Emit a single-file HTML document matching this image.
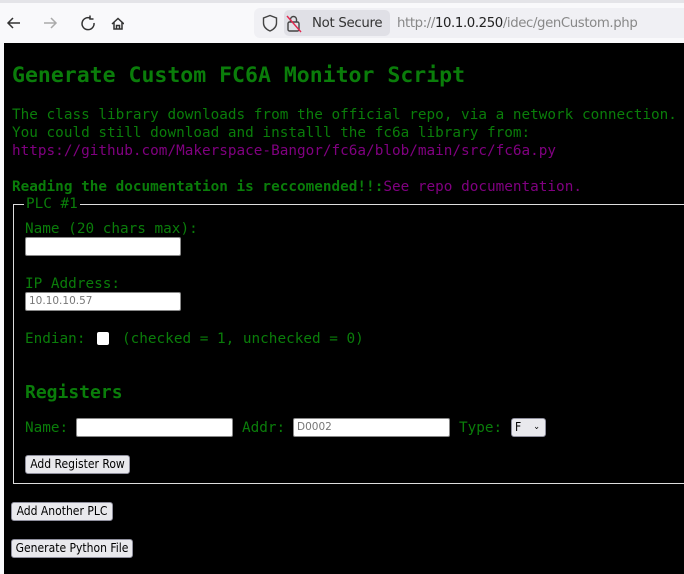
<!DOCTYPE html>
<html><head><meta charset="utf-8"><style>
*{margin:0;padding:0;box-sizing:border-box}
body{width:684px;height:574px;overflow:hidden;background:#f9f9fb;position:relative;font-family:"DejaVu Sans Mono","Liberation Mono",monospace}
.a{position:absolute;white-space:nowrap}
#top{position:absolute;left:0;top:0;width:684px;height:3px;background:#e4e4e8}
#url{position:absolute;left:254px;top:8px;width:440px;height:30px;background:#f0f0f4;border-radius:6px}
#pill{position:absolute;left:284px;top:10px;width:106px;height:26px;background:#e0e0e6;border-radius:5px}
.ui{font-family:"DejaVu Sans","Liberation Sans",sans-serif;font-size:13.3px}
#page{position:absolute;left:4px;top:43px;width:680px;height:531px;background:#000}
.g{color:#0a7d0a;font-size:14.35px}
.p{color:#800080;font-size:14.35px}
.in{position:absolute;background:#fff;border:1px solid #888;border-radius:2px;font-family:"DejaVu Sans",sans-serif;font-size:10.5px;color:#777;padding-left:3px;line-height:17px}
.bt{position:absolute;background:#e9e9ed;border:1px solid #8f8f9d;border-radius:3px;font-family:"DejaVu Sans Condensed","DejaVu Sans",sans-serif;font-size:12px;color:#000;text-align:center;line-height:17px}
</style></head><body>
<div id="top"></div>
<svg class="a" style="left:4px;top:14px" width="120" height="20" viewBox="0 0 120 20" fill="none" stroke-width="1.5">
<path d="M16 9H4M9 4L4 9L9 14" stroke="#333"/>
<path d="M40 9H52M47 4L52 9L47 14" stroke="#aaa"/>
<path d="M86 4A6 6 0 1 0 90 9" stroke="#333"/><path d="M86 1.5V5H89.5" stroke="#333"/>
<path d="M108 10L114 4.5L120 10M110 8.5V15H118V8.5M112.5 15V11.5H115.5V15" stroke="#333"/>
</svg>
<div id="url"></div><div id="pill"></div>
<svg class="a" style="left:261px;top:14px" width="50" height="20" viewBox="0 0 50 20" fill="none" stroke="#444" stroke-width="1.4">
<path d="M9 1.5L15.5 4V9C15.5 13 12.5 15.5 9 17C5.5 15.5 2.5 13 2.5 9V4Z"/>
<rect x="27" y="8" width="11" height="9" rx="1.5"/><path d="M29.5 8V5.5A3 3 0 0 1 35.5 5.5V8"/><path d="M26 2L40 18" stroke="#e22850"/>
</svg>
<div class="a ui" style="left:312px;top:16px;color:#333;letter-spacing:-0.3px">Not Secure</div>
<div class="a ui" style="left:397px;top:16px;color:#888;letter-spacing:-0.4px">http://<span style="color:#222">10.1.0.250</span>/idec/genCustom.php</div>
<div id="page"></div>
<div class="a" style="left:12px;top:63px;color:#0a7d0a;font-size:21.5px;font-weight:bold">Generate Custom FC6A Monitor Script</div>
<div class="a g" style="left:12px;top:107px">The class library downloads from the official repo, via a network connection.</div>
<div class="a g" style="left:12px;top:125px">You could still download and installl the fc6a library from:</div>
<div class="a p" style="left:12px;top:143px">https://github.com/Makerspace-Bangor/fc6a/blob/main/src/fc6a.py</div>
<div class="a g" style="left:12px;top:179px;font-weight:bold">Reading the documentation is reccomended!!:<span class="p" style="font-weight:normal">See repo documentation.</span></div>
<div class="a" style="left:13px;top:204px;width:680px;height:280px;border:1px solid #ddd;border-right:none"></div>
<div class="a g" style="left:24px;top:196px;background:#000;padding:0 2px">PLC #1</div>
<div class="a g" style="left:25px;top:221px">Name (20 chars max):</div>
<div class="in" style="left:25px;top:237px;width:156px;height:19px"></div>
<div class="a g" style="left:25px;top:276px">IP Address:</div>
<div class="in" style="left:25px;top:292px;width:156px;height:19px">10.10.10.57</div>
<div class="a g" style="left:25px;top:331px">Endian:</div>
<div class="a" style="left:97px;top:332px;width:12px;height:13px;background:#fff;border-radius:2px"></div>
<div class="a g" style="left:122px;top:331px">(checked = 1, unchecked = 0)</div>
<div class="a" style="left:25px;top:382px;color:#0a7d0a;font-size:18px;font-weight:bold">Registers</div>
<div class="a g" style="left:25px;top:420px">Name:</div>
<div class="in" style="left:76px;top:418px;width:157px;height:19px"></div>
<div class="a g" style="left:242px;top:420px">Addr:</div>
<div class="in" style="left:293px;top:418px;width:157px;height:19px">D0002</div>
<div class="a g" style="left:459px;top:420px">Type:</div>
<div class="bt" style="left:511px;top:418px;width:35px;height:19px;text-align:left;padding-left:3px;background:#e9e9ed">F<span style="position:absolute;right:5px;top:0;font-size:9px">&#8964;</span></div>
<div class="bt" style="left:25px;top:455px;width:105px;height:19px">Add Register Row</div>
<div class="bt" style="left:11px;top:502px;width:102px;height:19px">Add Another PLC</div>
<div class="bt" style="left:11px;top:539px;width:122px;height:19px">Generate Python File</div>
</body></html>
